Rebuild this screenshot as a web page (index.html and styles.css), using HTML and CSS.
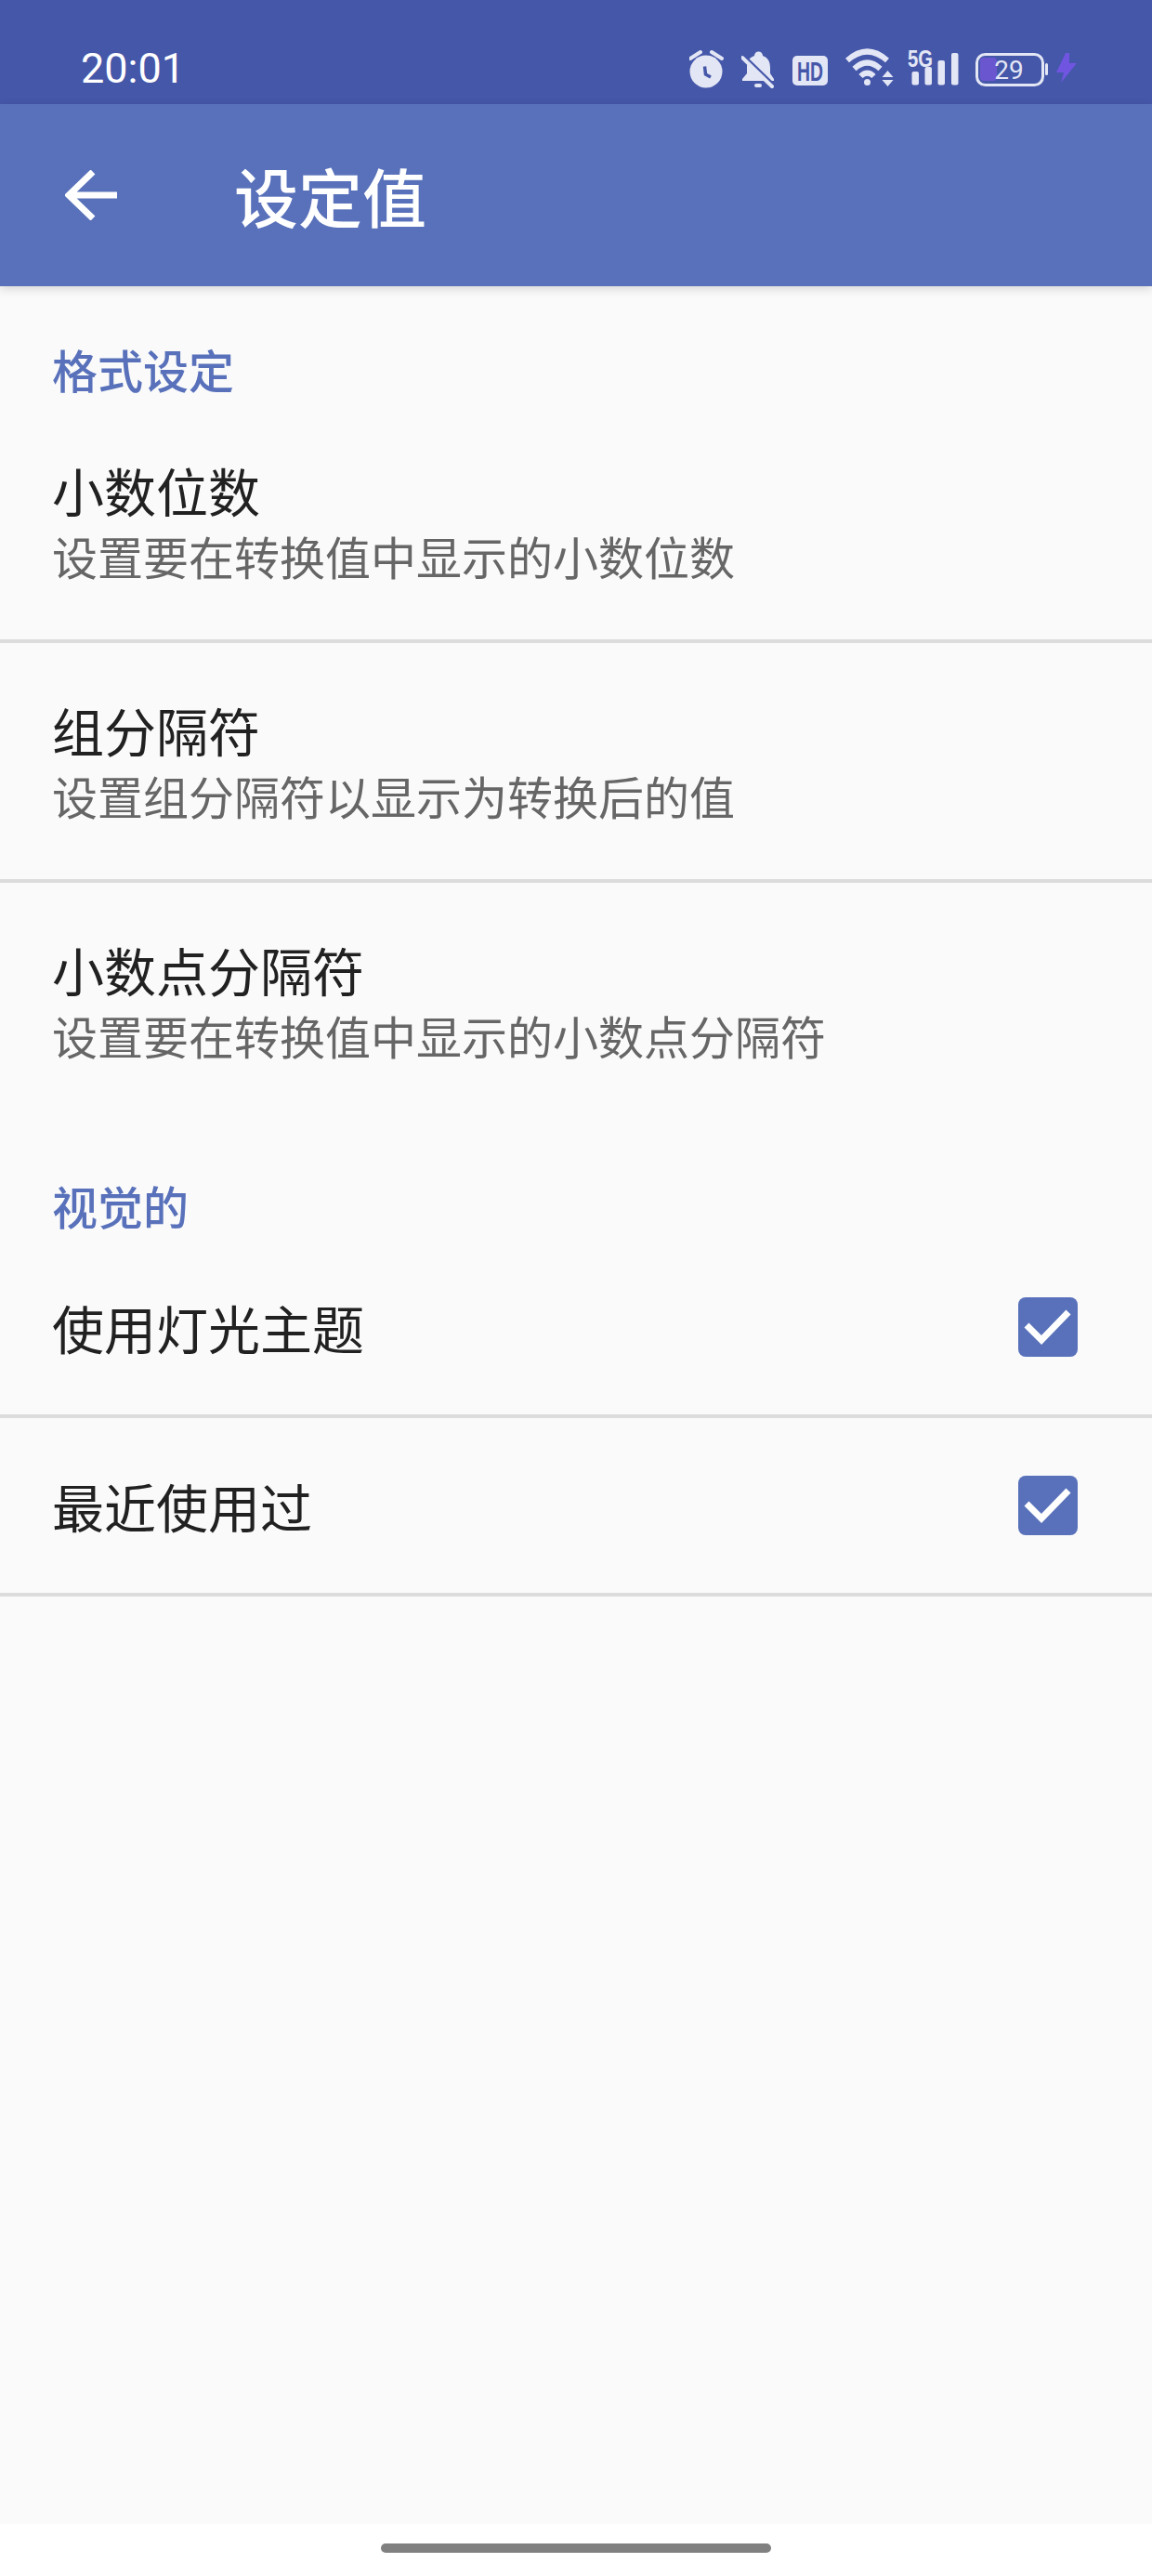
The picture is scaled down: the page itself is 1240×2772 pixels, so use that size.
FILE: index.html
```html
<!DOCTYPE html>
<html lang="zh-CN">
<head>
<meta charset="UTF-8">
<meta name="viewport" content="width=device-width, initial-scale=1.0">
<title>设定值</title>
<link rel="stylesheet" href="styles.css">
</head>
<body>
<div class="status-bar">
    <span class="time">20:01</span>
    <div class="status-icons">
        <svg width="56" height="50" viewBox="0 0 56 50">
            <circle class="ic-fill" cx="18" cy="27" r="17.5"/>
            <path class="ic-line" d="M1 13 12 6M35 13 24 6"/>
            <path class="ic-hand" d="M16.5 21.5 17.5 30 23 33"/>
        </svg>
        <svg width="55" height="50" viewBox="0 0 55 50">
            <path class="ic-fill" d="M14 10a4.5 4.5 0 0 1 9 0c6 2 8 7 8 13v6l4 6v2H1v-2l5-6v-7c0-5 2-10 8-12z"/>
            <rect class="ic-fill" x="14" y="40" width="8" height="4" rx="2"/>
            <path class="ic-cut" d="M1 9 35 42"/>
            <path class="ic-line" d="M1 12 33 43"/>
        </svg>
        <svg width="57" height="50" viewBox="0 0 57 50">
            <rect class="ic-fill" x="0" y="10" width="38" height="32" rx="5"/>
            <text class="ic-hd" x="19" y="37" text-anchor="middle" textLength="28" lengthAdjust="spacingAndGlyphs">HD</text>
        </svg>
        <svg width="67" height="50" viewBox="0 0 67 50">
            <path class="ic-arc" d="M2 15Q23.5-4 45 15"/>
            <path class="ic-arc" d="M9.5 24Q23.5 11 37.5 24"/>
            <path class="ic-arc" d="M16.5 32Q23.5 25 30.5 32"/>
            <circle class="ic-fill" cx="23.5" cy="38.5" r="3.5"/>
            <path class="ic-fill" d="M45.5 26 51.5 33H39.500zM39.500 36H51.500L45.500 43z"/>
        </svg>
        <svg width="73" height="50" viewBox="0 0 73 50">
            <text class="ic-5g" x="0" y="22" textLength="27" lengthAdjust="spacingAndGlyphs">5G</text>
            <rect class="ic-fill" x="4.5" y="27" width="7.5" height="14.5" rx="2"/>
            <rect class="ic-fill" x="18.5" y="22" width="7.5" height="19.5" rx="2"/>
            <rect class="ic-fill" x="32.5" y="15" width="7.5" height="26.5" rx="2"/>
            <rect class="ic-fill" x="47" y="7" width="7.5" height="34.5" rx="2"/>
        </svg>
        <svg width="87" height="50" viewBox="0 0 87 50">
            <rect class="ic-batt" x="1.5" y="8.5" width="71" height="33" rx="9"/>
            <rect class="ic-level" x="5" y="12" width="18" height="25" rx="4"/>
            <rect class="ic-fill" x="75" y="18" width="3" height="13" rx="1.5"/>
            <text class="ic-pct" x="36" y="35" text-anchor="middle">29</text>
        </svg>
        <svg width="23" height="50" viewBox="0 0 23 50">
            <path class="ic-bolt" d="M10 7 0 28H8L5 39 22 18H14L14 7z"/>
        </svg>
    </div>
</div>

<header class="app-bar">
    <svg class="back" width="56" height="54" viewBox="0 0 56 54">
        <path d="M56 27H4M30 2 4 27 30 52"/>
    </svg>
    <h1>设定值</h1>
</header>

<main class="content">
    <h2 class="section-title">格式设定</h2>
    <div class="row row-text">
        <div class="row-title">小数位数</div>
        <div class="row-sub">设置要在转换值中显示的小数位数</div>
    </div>
    <div class="row row-text">
        <div class="row-title">组分隔符</div>
        <div class="row-sub">设置组分隔符以显示为转换后的值</div>
    </div>
    <div class="row row-text row-last">
        <div class="row-title">小数点分隔符</div>
        <div class="row-sub">设置要在转换值中显示的小数点分隔符</div>
    </div>

    <h2 class="section-title">视觉的</h2>
    <div class="row row-check">
        <div class="row-title">使用灯光主题</div>
        <svg class="check" width="64" height="64" viewBox="0 0 64 64">
            <rect width="64" height="64" rx="8"/>
            <path d="M9 30 25 46 54 16"/>
        </svg>
    </div>
    <div class="row row-check">
        <div class="row-title">最近使用过</div>
        <svg class="check" width="64" height="64" viewBox="0 0 64 64">
            <rect width="64" height="64" rx="8"/>
            <path d="M9 30 25 46 54 16"/>
        </svg>
    </div>
</main>

<div class="nav-bar"><div class="nav-pill"></div></div>
</body>
</html>
```

FILE: styles.css
```css
body {
    margin: 0;
    height: 2772px;
    display: flex;
    flex-direction: column;
    background-color: #fafafa;
    font-family: "Noto Sans CJK SC", Roboto, sans-serif;
    overflow: hidden;
}

.status-bar {
    height: 112px;
    box-sizing: border-box;
    padding: 49px 0 0 87px;
    display: flex;
    justify-content: space-between;
    align-items: flex-start;
    background-color: #4557a9;
}
.time {
    font-family: Roboto, sans-serif;
    font-size: 45px;
    line-height: 50px;
    color: #fff;
}
.status-icons {
    display: flex;
    margin-top: 1px;
    padding-right: 80px;
}
.ic-fill { fill: #e3e6f5; }
.ic-line { fill: none; stroke: #e3e6f5; stroke-width: 4; stroke-linecap: round; }
.ic-hand { fill: none; stroke: #4557a9; stroke-width: 3.5; }
.ic-cut { fill: none; stroke: #4557a9; stroke-width: 4; }
.ic-arc { fill: none; stroke: #e3e6f5; stroke-width: 6; }
.ic-hd { font-family: "Liberation Sans", sans-serif; font-size: 30px; font-weight: 700; fill: #4557a9; }
.ic-5g { font-family: "Liberation Sans", sans-serif; font-size: 25px; font-weight: 700; fill: #e3e6f5; }
.ic-batt { fill: none; stroke: #e3e6f5; stroke-width: 3; }
.ic-level { fill: #6a56cf; }
.ic-pct { font-family: Roboto, sans-serif; font-size: 28px; fill: #e3e6f5; }
.ic-bolt { fill: #6f55e0; }

.app-bar {
    position: relative;
    height: 196px;
    box-sizing: border-box;
    padding-left: 70px;
    display: flex;
    align-items: center;
    background-color: #5871ba;
    box-shadow: 0 3px 10px rgba(0, 0, 0, 0.15);
}
.back {
    margin-right: 126px;
}
.back path {
    fill: none;
    stroke: #fff;
    stroke-width: 7;
}
.app-bar h1 {
    margin: 0;
    font-size: 69px;
    font-weight: 500;
    line-height: 90px;
    color: #fff;
}

.content {
    flex: 1;
}
.section-title {
    margin: 0;
    height: 126px;
    box-sizing: border-box;
    padding: 56px 0 0 56px;
    font-size: 49px;
    font-weight: 500;
    line-height: 66px;
    color: #5871ba;
}
.row {
    padding-left: 56px;
    border-bottom: 4px solid #dcdcdc;
}
.row-last {
    border-bottom-color: transparent;
}
.row-text {
    height: 258px;
    box-sizing: border-box;
    padding-top: 54px;
}
.row-check {
    height: 192px;
    box-sizing: border-box;
    padding-right: 80px;
    display: flex;
    justify-content: space-between;
    align-items: center;
}
.row-title {
    font-size: 56px;
    line-height: 78px;
    color: #212121;
}
.row-sub {
    font-size: 49px;
    line-height: 64px;
    color: #666;
}
.check rect {
    fill: #5871ba;
}
.check path {
    fill: none;
    stroke: #fff;
    stroke-width: 7;
}

.nav-bar {
    height: 56px;
    box-sizing: border-box;
    padding-top: 21px;
    background-color: #fff;
}
.nav-pill {
    width: 420px;
    height: 10px;
    margin: 0 auto;
    border-radius: 5px;
    background-color: #808080;
}
```
